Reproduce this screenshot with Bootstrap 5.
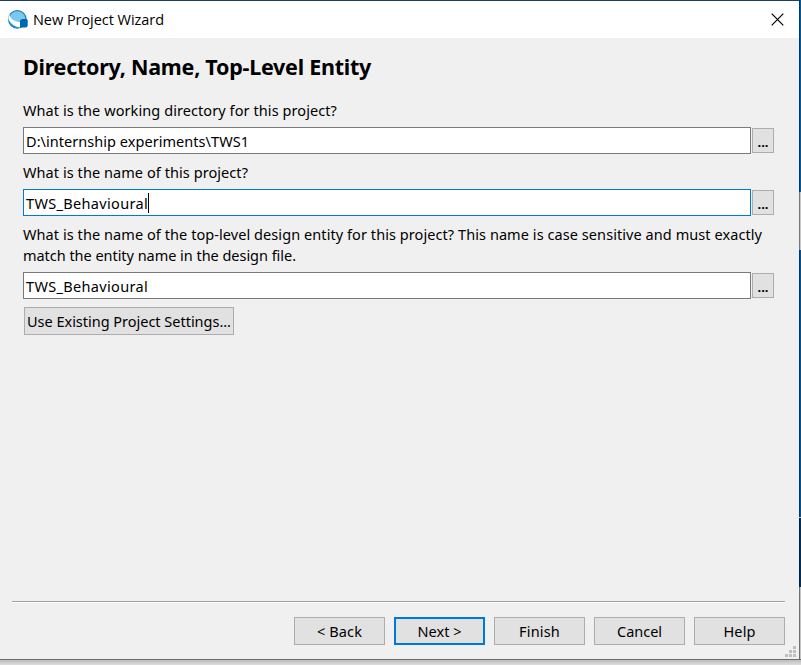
<!DOCTYPE html>
<html lang="en">
<head>
<meta charset="utf-8">
<title>New Project Wizard</title>
<link href="https://cdn.jsdelivr.net/npm/bootstrap@5.3.0/dist/css/bootstrap.min.css" rel="stylesheet">
<style>
body{width:801px;height:665px;background:#efefef;color:#000;font-family:"Noto Sans","Open Sans",sans-serif;font-size:14.5px;line-height:21px}
.wizard{width:799px;height:659px;border-top:1px solid #1b4060;background:#f0f0f0}
.edge{width:2px;height:659px;background:linear-gradient(90deg,#003a69 50%,#005a9e 50%) 0 0/2px 192px no-repeat,linear-gradient(90deg,#777 50%,#c8c8c8 50%) 0 192px/2px 58px no-repeat,linear-gradient(90deg,#003a69 50%,#005292 50%) 0 250px/2px 267px no-repeat,linear-gradient(#b9c4cd,#b9c4cd) 0 517px/2px 1px no-repeat,linear-gradient(90deg,#00203f 50%,#00305a 50%) 0 518px/2px 69px no-repeat,linear-gradient(90deg,#707070 50%,#c4c4c4 50%) 0 587px/2px 73px no-repeat}
.titlebar{height:37px;padding-left:7px;font-family:"Open Sans",sans-serif;font-size:14.5px}
.close-mark{margin-right:15px}
.heading{font-size:21.5px;line-height:28px;font-weight:700;padding-top:15px;margin-bottom:19px}
.page{padding-left:23px;width:774px}
.entry{margin-top:6px;padding-bottom:8px}
.field,.field:focus{height:27px;padding:1px 2px 0;border:1px solid #7a7a7a;border-radius:0;background:#fff;color:#000;font-size:inherit;line-height:24px;width:728px}
.field.active{border-color:#0078d7}
.push,.push:hover{border:1px solid #adadad;border-radius:0;background:#e1e1e1;color:#000;font-size:inherit;line-height:21px;padding:1px 0 0;height:28px;width:91px}
.push.browse{width:22px;height:25px;font-weight:700;font-size:13px;padding-top:3px;line-height:20px}
.push.existing{width:210px;margin-left:1px}
.push.default{border:2px solid #0078d7;padding-top:0}
.caret{width:1px;height:20px;background:#000}
.rule{height:2px;width:773px;background:linear-gradient(#a0a0a0 50%,#fff 50%)}
.wizard-footer{width:785px;padding:0 0 14px 12px}
.actions{gap:9px;margin-top:14px}
.shade{height:6px;background:linear-gradient(#6d6d6d 0 1px,#bcbcbc 1px,#dedede)}
.grip{right:3px;bottom:2px}
.fit{display:inline-block;white-space:nowrap}
</style>
</head>
<body class="overflow-hidden">
<div class="d-flex">
<main class="wizard d-flex flex-column position-relative">
  <header class="titlebar bg-white d-flex align-items-center flex-shrink-0">
    <svg width="22" height="22" viewBox="0 0 22 22"><circle cx="10.3" cy="10.3" r="8.7" fill="#7cc7ee" stroke="#1f83bd" stroke-width="1.3"/><path d="M2.2 5.5C4 11 8 13 13.5 13v5.5Q4.500 17.500 1.500 10.500Q1 7.500 2.200 5.500Z" fill="#fff"/><path d="M1.700 11q3.500 6 10.300 7.700q-8 .5-10.300-7.700Z" fill="#2495cc"/><path d="M13 11.500l2-1.500h4.500l1.200 1v6l-1.500 1.500H13Z" fill="#0067ac"/></svg>
    <span class="ms-1"><span class="fit" data-w="131">New Project Wizard</span></span>
    <svg class="close-mark ms-auto" width="13" height="13" viewBox="0 0 13 13"><path d="M.7.7l11.600 11.600M12.300.7L.7 12.300" stroke="#000" stroke-width="1.2"/></svg>
  </header>
  <section class="page flex-grow-1">
    <h1 class="heading"><span class="fit" data-w="348">Directory, Name, Top-Level Entity</span></h1>
    <div><span class="fit" data-w="314">What is the working directory for this project?</span></div>
    <div class="entry d-flex align-items-center justify-content-between"><div class="field form-control"><span class="fit" data-w="223">D:\internship experiments\TWS1</span></div><button class="push browse btn">...</button></div>
    <div><span class="fit" data-w="225">What is the name of this project?</span></div>
    <div class="entry d-flex align-items-center justify-content-between"><div class="field active form-control d-flex align-items-center"><span class="fit" data-w="122">TWS_Behavioural</span><span class="caret"></span></div><button class="push browse btn">...</button></div>
    <div><span class="fit" data-w="739">What is the name of the top-level design entity for this project? This name is case sensitive and must exactly</span></div>
    <div><span class="fit" data-w="273">match the entity name in the design file.</span></div>
    <div class="entry d-flex align-items-center justify-content-between"><div class="field form-control"><span class="fit" data-w="122">TWS_Behavioural</span></div><button class="push browse btn">...</button></div>
    <button class="push existing btn"><span class="fit" data-w="204">Use Existing Project Settings...</span></button>
  </section>
  <footer class="wizard-footer">
    <div class="rule"></div>
    <div class="actions d-flex justify-content-end">
      <button class="push btn"><span class="fit" data-w="45">&lt; Back</span></button>
      <button class="push default btn"><span class="fit" data-w="44">Next &gt;</span></button>
      <button class="push btn"><span class="fit" data-w="41">Finish</span></button>
      <button class="push btn"><span class="fit" data-w="45">Cancel</span></button>
      <button class="push btn"><span class="fit" data-w="32">Help</span></button>
    </div>
  </footer>
  <svg class="grip position-absolute" width="11" height="11" viewBox="0 0 11 11" fill="#bfbfbf"><path d="M8 0h3v3H8zM4 4h3v3H4zM8 4h3v3H8zM0 8h3v3H0zM4 8h3v3H4zM8 8h3v3H8z"/></svg>
</main>
<div class="edge"></div>
</div>
<div class="shade"></div>
<script src="https://cdn.jsdelivr.net/npm/bootstrap@5.3.0/dist/js/bootstrap.bundle.min.js"></script>
<script>
// Keep each label at its designed width by distributing tracking.
document.querySelectorAll('.fit').forEach(function(el){
  var w=el.getBoundingClientRect().width;
  el.style.letterSpacing=((el.dataset.w-w)/el.textContent.length)+'px';
});
</script>
</body>
</html>
